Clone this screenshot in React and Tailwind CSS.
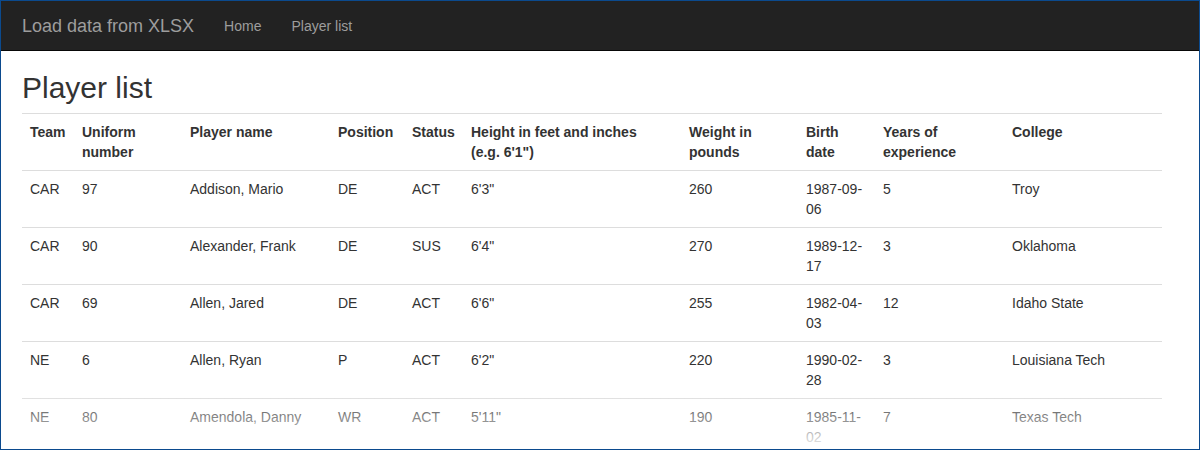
import React from "react";

const columns = [
  { label: "Team", width: "w-[52px]" },
  { label: "Uniform number", width: "w-[108px]" },
  { label: "Player name", width: "w-[148px]" },
  { label: "Position", width: "w-[74px]" },
  { label: "Status", width: "w-[59px]" },
  { label: "Height in feet and inches", second: "(e.g. 6'1\")", width: "w-[218px]" },
  { label: "Weight in pounds", width: "w-[117px]" },
  { label: "Birth date", width: "w-[77px]" },
  { label: "Years of experience", width: "w-[129px]" },
  { label: "College", width: "w-[158px]" },
];

const players = [
  ["CAR", "97", "Addison, Mario", "DE", "ACT", "6'3\"", "260", "1987-09-06", "5", "Troy"],
  ["CAR", "90", "Alexander, Frank", "DE", "SUS", "6'4\"", "270", "1989-12-17", "3", "Oklahoma"],
  ["CAR", "69", "Allen, Jared", "DE", "ACT", "6'6\"", "255", "1982-04-03", "12", "Idaho State"],
  ["NE", "6", "Allen, Ryan", "P", "ACT", "6'2\"", "220", "1990-02-28", "3", "Louisiana Tech"],
  ["NE", "80", "Amendola, Danny", "WR", "ACT", "5'11\"", "190", "1985-11-02", "7", "Texas Tech"],
];

export default function App() {
  return (
    <div className="relative h-[450px] w-[1200px] overflow-hidden border border-[#0b4a8e] bg-white font-['Liberation_Sans',Arial,sans-serif] text-[14px] leading-5 text-[#333]">
      <nav className="h-[50px] border-b border-[#080808] bg-[#222]">
        <div className="flex h-full items-stretch pl-[6px]">
          <a className="flex items-center px-[15px] text-[18px] leading-5 text-[#9d9d9d]" href="#">
            Load data from XLSX
          </a>
          <a className="flex items-center px-[15px] text-[#9d9d9d]" href="#">
            Home
          </a>
          <a className="flex items-center px-[15px] text-[#9d9d9d]" href="#">
            Player list
          </a>
        </div>
      </nav>

      <main className="ml-[21px] w-[1140px]">
        <h2 className="mt-5 mb-[9px] text-[30px] leading-[33px] font-normal">Player list</h2>
        <table className="w-full table-fixed border-collapse">
          <colgroup>
            {columns.map((c) => (
              <col key={c.label} className={c.width} />
            ))}
          </colgroup>
          <thead>
            <tr>
              {columns.map((c) => (
                <th
                  key={c.label}
                  className="h-[57px] border-t border-b border-[#ddd] p-2 text-left align-top font-bold"
                >
                  {c.label}
                  {c.second && (
                    <>
                      <br />
                      {c.second}
                    </>
                  )}
                </th>
              ))}
            </tr>
          </thead>
          <tbody>
            {players.map((row) => (
              <tr key={row[2]}>
                {row.map((cell, i) => (
                  <td key={i} className="h-[57px] border-t border-[#ddd] p-2 align-top">
                    {cell}
                  </td>
                ))}
              </tr>
            ))}
          </tbody>
        </table>
      </main>

      {/* fade at the bottom of the window */}
      <div className="pointer-events-none absolute inset-x-0 bottom-0 h-[58px] bg-gradient-to-b from-white/0 via-white/45 to-white/95" />
    </div>
  );
}
